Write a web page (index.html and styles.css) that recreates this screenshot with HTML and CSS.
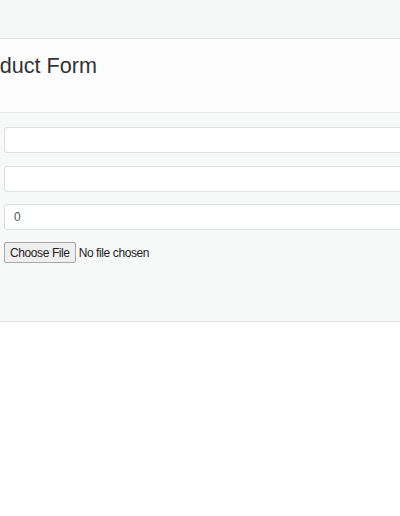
FILE: index.html
```html
<!DOCTYPE html>
<html>
<head>
<meta charset="utf-8">
<link rel="stylesheet" href="styles.css">
</head>
<body>
<div class="topbar"></div>
<div class="panel">
  <div class="panel-heading">
    <h2 class="title">Product Form</h2>
  </div>
  <div class="panel-body">
    <form class="form">
      <input class="field" type="text">
      <input class="field" type="text">
      <input class="field" type="number" value="0">
      <input class="file" type="file">
    </form>
  </div>
</div>
</body>
</html>
```
FILE: styles.css
```css
html, body {
  margin: 0;
  padding: 0;
  overflow: hidden;
  background: #fefefe;
  font-family: "Liberation Sans", Arial, sans-serif;
}
.topbar {
  height: 38px;
  background: #f5f6f6;
}
.panel {
  border-top: 1px solid #e2e2e2;
  border-bottom: 1px solid #e2e2e2;
}
.panel-heading {
  background: #fdfdfd;
  height: 74px;
  box-sizing: border-box;
  padding-top: 14.5px;
  border-bottom: 1px solid #e6e6e6;
}
.title {
  margin: 0 0 0 -33.8px;
  font-size: 21.6px;
  line-height: 24px;
  font-weight: normal;
  color: #333;
  white-space: nowrap;
}
.panel-body {
  background: #f7f8f8;
  height: 208px;
  box-sizing: border-box;
  padding: 14px 0 0 4px;
}
.form {
  display: flex;
  flex-direction: column;
  align-items: flex-start;
  gap: 12.5px;
}
.field {
  width: 600px;
  height: 26px;
  box-sizing: border-box;
  margin: 0;
  border: 1px solid #dcdfe3;
  border-radius: 3px;
  background: #fff;
  padding: 0 9px;
  font-family: "Liberation Sans", Arial, sans-serif;
  font-size: 12px;
  color: #555;
  outline: none;
}
.field::-webkit-inner-spin-button,
.field::-webkit-outer-spin-button {
  -webkit-appearance: none;
  margin: 0;
}
.file {
  margin: -0.5px 0 0 0;
  font-family: "Liberation Sans", Arial, sans-serif;
  font-size: 12px;
  color: #222;
  letter-spacing: -0.4px;
}
.file::file-selector-button {
  font-family: "Liberation Sans", Arial, sans-serif;
  font-size: 12px;
  letter-spacing: -0.4px;
  height: 21px;
  padding: 0 5px;
  margin-right: 3px;
  border: 1px solid #a9a9a9;
  border-radius: 2px;
  background: #efefef;
  color: #222;
}
```
